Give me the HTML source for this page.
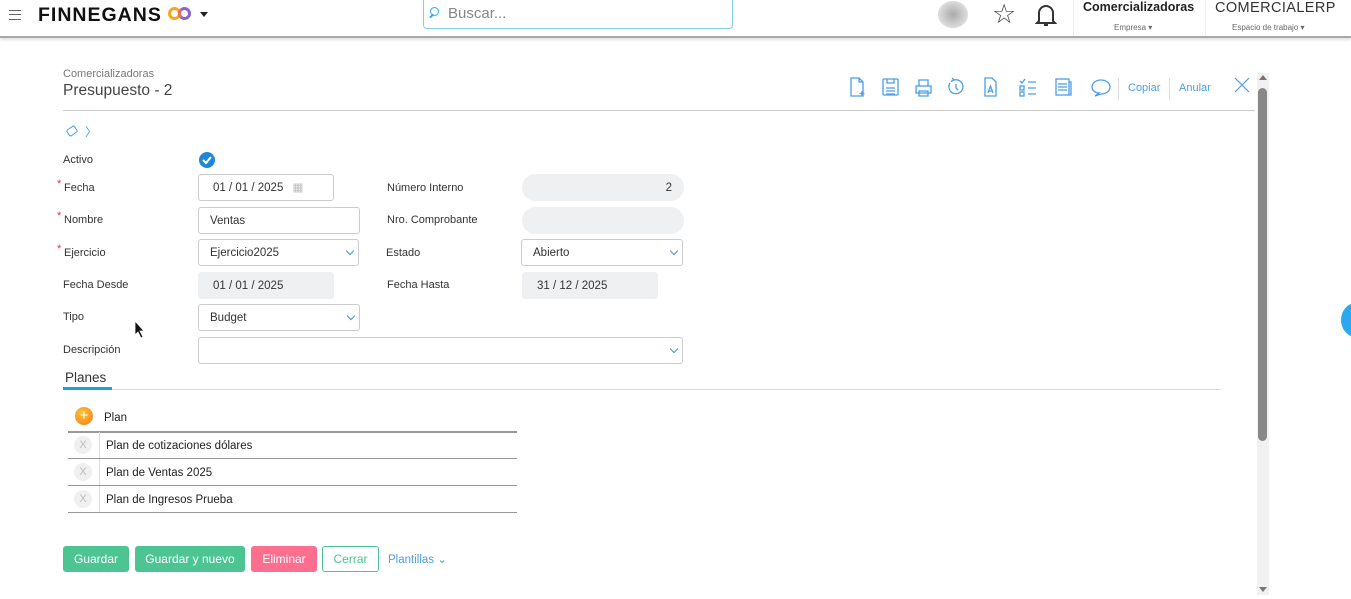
<!DOCTYPE html>
<html><head><meta charset="utf-8"><style>
*{box-sizing:border-box;margin:0;padding:0}
body{width:1351px;height:599px;overflow:hidden;background:#fff;font-family:"Liberation Sans",sans-serif;position:relative;color:#333}
.a{position:absolute}
.hdr{left:0;top:0;width:1351px;height:38px;background:#fff;border-bottom:2px solid #a8a8ad;box-shadow:0 2px 3px rgba(0,0,0,.12)}
.lbl{font-size:11px;color:#333}
.req:before{content:"*";color:#e33;position:absolute;left:-7px;top:-4px;font-size:11px}
.inp{border:1px solid #ccc;border-radius:3px;height:27px;font-size:11.5px;color:#333;padding:0 11px;line-height:27px;background:#fff}
.dis{background:#eff0f2;border-color:#eff0f2}
.chev{position:absolute;right:5px;top:8px;width:6px;height:6px;border-right:1px solid #4a90d9;border-bottom:1px solid #4a90d9;transform:rotate(45deg)}
.row{left:68px;width:449px;height:27px;border-bottom:1.5px solid #999;font-size:11.5px;color:#222}
.x{position:absolute;left:6px;top:4px;width:18px;height:18px;border-radius:50%;background:#f0f0f0;color:#bbb;font-size:11px;text-align:center;line-height:18px}
.btn{top:546px;height:26px;border-radius:3px;font-size:12px;color:#fff;text-align:center;line-height:26px}
</style></head><body>
<div class="a hdr"></div>
<div class="a" style="left:9px;top:10px;width:12px;height:10px;border-top:1.5px solid #666;border-bottom:1.5px solid #666"><div style="margin-top:3px;border-top:1.5px solid #666"></div></div>
<div class="a" style="left:38px;top:4px;font-size:19.5px;font-weight:bold;color:#111;letter-spacing:1px">FINNEGANS</div>
<div class="a" style="left:168px;top:7px;width:13px;height:13px;border:3px solid #f6a623;border-radius:50%"></div>
<div class="a" style="left:178px;top:7px;width:13px;height:13px;border:3px solid #8a63d2;border-radius:50%;border-left-color:#e86a5a"></div>
<div class="a" style="left:200px;top:12px;border-left:4px solid transparent;border-right:4px solid transparent;border-top:5px solid #222"></div>
<div class="a" style="left:423px;top:0;width:310px;height:29px;border:1px solid #7fd0ea;border-top:none;border-radius:0 0 4px 4px"></div>
<div class="a" style="left:430px;top:7px;width:9px;height:9px;border:1.5px solid #2bb0e0;border-radius:50%"></div>
<div class="a" style="left:429px;top:15px;width:5px;height:1.5px;background:#2bb0e0;transform:rotate(-45deg)"></div>
<div class="a" style="left:448px;top:5px;font-size:15px;color:#888">Buscar...</div>
<div class="a" style="left:938px;top:1px;width:30px;height:27px;border-radius:45%;background:radial-gradient(#aaa,#ddd 70%,transparent 72%)"></div>
<div class="a" style="left:992px;top:0;font-size:27px;color:#444;line-height:28px">☆</div>
<svg class="a" style="left:1035px;top:3px" width="22" height="24" viewBox="0 0 22 24"><path d="M4 18V10a7 7 0 0 1 14 0v8l2 2H2z" fill="none" stroke="#333" stroke-width="2"/><path d="M9 22h4" stroke="#333" stroke-width="2"/></svg>
<div class="a" style="left:1073px;top:0;width:1px;height:36px;background:#eee"></div>
<div class="a" style="left:1205px;top:0;width:1px;height:36px;background:#eee"></div>
<div class="a" style="left:1083px;top:0;font-size:12.5px;font-weight:bold;color:#222">Comercializadoras</div>
<div class="a" style="left:1114px;top:23px;font-size:8px;color:#666">Empresa ▾</div>
<div class="a" style="left:1215px;top:0;font-size:14.5px;color:#333;letter-spacing:.4px">COMERCIALERP</div>
<div class="a" style="left:1232px;top:23px;font-size:8px;color:#666">Espacio de trabajo ▾</div>

<div class="a" style="left:63px;top:68px;font-size:11px;color:#777">Comercializadoras</div>
<div class="a" style="left:63px;top:82px;font-size:15.5px;color:#444">Presupuesto - 2</div>
<div class="a" style="left:63px;top:110px;width:1192px;height:1px;background:#ccc"></div>
<div class="a" style="left:67px;top:127px;width:10px;height:8px;border:1.3px solid #4aa3e8;border-radius:2px;transform:rotate(-35deg)"></div>
<div class="a" style="left:85px;top:123px;font-size:12px;color:#4aa3e8">〉</div>

<svg class="a" style="left:849px;top:77px" width="380" height="20" viewBox="0 0 380 20" fill="none" stroke="#4a9fe8" stroke-width="1.3">
<path d="M2 1h8l4 4v14H2z M10 1v4h4"/><path d="M13 14v5M10.5 16.5h5"/>
<rect x="34" y="2" width="15" height="16" rx="1"/><path d="M37 11h9M37 14h9M37 17h9M38 2v4h7V2"/>
<rect x="67" y="9" width="15" height="7"/><path d="M70 9V3h9v6M70 14h9v5h-9z"/>
<path d="M101 6a7 7 0 1 0 4-3"/><path d="M103 1l2 2-3 1.5M107 7v4l2 2"/>
<path d="M136 1h7l4 4v14h-11z"/><path d="M139 16l2.5-7 2.5 7M140 14h3"/>
<path d="M171 4l2 2 3-4M179 5h8M179 11h8M179 17h8"/><rect x="171" y="9" width="4" height="4"/><rect x="171" y="15" width="4" height="4"/>
<rect x="207" y="2" width="13" height="16"/><path d="M220 5h2v13h-2M209 7h9M209 10h9M209 13h9"/>
<path d="M250 16c-3 0-7-2-7-6s4-7 9-7 9 3 9 7-4 7-9 7l-6 2z"/>
</svg>
<div class="a" style="left:1118px;top:78px;width:1px;height:22px;background:#ddd"></div>
<div class="a" style="left:1169px;top:78px;width:1px;height:22px;background:#ddd"></div>
<div class="a" style="left:1128px;top:82px;font-size:11px;color:#4a9fe8">Copiar</div>
<div class="a" style="left:1179px;top:82px;font-size:11px;color:#4a9fe8">Anular</div>
<svg class="a" style="left:1234px;top:77px" width="16" height="16"><path d="M1 1l14 14M15 1L1 15" stroke="#4a9fe8" stroke-width="1.2"/></svg>
<div class="a" style="left:1257px;top:73px;width:12px;height:522px;background:#f1f1f1"></div>
<div class="a" style="left:1259px;top:75px;border-left:4px solid transparent;border-right:4px solid transparent;border-bottom:5px solid #777"></div>
<div class="a" style="left:1259px;top:587px;border-left:4px solid transparent;border-right:4px solid transparent;border-top:5px solid #777"></div>
<div class="a" style="left:1258px;top:88px;width:9px;height:353px;background:#888;border-radius:5px"></div>
<div class="a" style="left:1341px;top:303px;width:30px;height:34px;border-radius:50%;background:#2aa8f0"></div>

<div class="a lbl" style="left:63px;top:154px">Activo</div>
<div class="a" style="left:199px;top:152px;width:16px;height:16px;border-radius:50%;background:#1e88d8"></div>
<svg class="a" style="left:199px;top:152px" width="16" height="16"><path d="M4 8l3 3 5-6" stroke="#fff" stroke-width="2" fill="none"/></svg>

<div class="a lbl req" style="left:64px;top:182px">Fecha</div>
<div class="a inp" style="left:198px;top:174px;width:136px;padding-left:14px">01 / 01 / 2025 <span style="color:#bbb;margin-left:6px">▦</span></div>
<div class="a lbl req" style="left:64px;top:214px">Nombre</div>
<div class="a inp" style="left:198px;top:207px;width:162px">Ventas</div>
<div class="a lbl req" style="left:64px;top:247px">Ejercicio</div>
<div class="a inp" style="left:198px;top:239px;width:161px">Ejercicio2025<span class="chev"></span></div>
<div class="a lbl" style="left:63px;top:279px">Fecha Desde</div>
<div class="a inp dis" style="left:198px;top:272px;width:136px;padding-left:14px">01 / 01 / 2025</div>
<div class="a lbl" style="left:63px;top:311px">Tipo</div>
<div class="a inp" style="left:198px;top:304px;width:162px">Budget<span class="chev"></span></div>
<div class="a lbl" style="left:63px;top:344px">Descripción</div>
<div class="a inp" style="left:198px;top:337px;width:485px"><span class="chev"></span></div>

<div class="a lbl" style="left:387px;top:182px">Número Interno</div>
<div class="a inp dis" style="left:522px;top:174px;width:162px;border-radius:14px;text-align:right">2</div>
<div class="a lbl" style="left:387px;top:214px">Nro. Comprobante</div>
<div class="a inp dis" style="left:522px;top:207px;width:162px;border-radius:14px"></div>
<div class="a lbl" style="left:386px;top:247px">Estado</div>
<div class="a inp" style="left:521px;top:239px;width:162px">Abierto<span class="chev"></span></div>
<div class="a lbl" style="left:387px;top:279px">Fecha Hasta</div>
<div class="a inp dis" style="left:522px;top:272px;width:136px;padding-left:14px">31 / 12 / 2025</div>

<svg class="a" style="left:134px;top:320px" width="12" height="20"><path d="M1 1v14l3-3 3 6 2-1-3-6h4z" fill="#111" stroke="#fff" stroke-width=".8"/></svg>

<div class="a" style="left:65px;top:370px;font-size:13.5px;color:#333">Planes</div>
<div class="a" style="left:63px;top:389px;width:1158px;height:1px;background:#ddd"></div>
<div class="a" style="left:63px;top:387px;width:49px;height:3px;background:#1aa3c9"></div>

<div class="a" style="left:75px;top:407px;width:18px;height:18px;border-radius:50%;background:radial-gradient(circle at 40% 35%,#ffc233,#f57a1c);color:#fff;text-align:center;line-height:17px;font-size:15px">+</div>
<div class="a" style="left:104px;top:412px;font-size:11.5px;color:#222">Plan</div>
<div class="a" style="left:68px;top:431px;width:449px;height:1.5px;background:#999"></div>
<div class="a row" style="top:432px"><div class="x">X</div><div class="a" style="left:31px;top:0;width:1px;height:26px;background:#ddd"></div><div class="a" style="left:38px;top:8px">Plan de cotizaciones dólares</div></div>
<div class="a row" style="top:459px"><div class="x">X</div><div class="a" style="left:31px;top:0;width:1px;height:26px;background:#ddd"></div><div class="a" style="left:38px;top:8px">Plan de Ventas 2025</div></div>
<div class="a row" style="top:486px"><div class="x">X</div><div class="a" style="left:31px;top:0;width:1px;height:26px;background:#ddd"></div><div class="a" style="left:38px;top:8px">Plan de Ingresos Prueba</div></div>

<div class="a btn" style="left:63px;width:66px;background:#4cc593">Guardar</div>
<div class="a btn" style="left:135px;width:110px;background:#4cc593">Guardar y nuevo</div>
<div class="a btn" style="left:251px;width:66px;background:#fe6f8f">Eliminar</div>
<div class="a btn" style="left:322px;width:57px;border:1px solid #4cc593;color:#4cc593;line-height:24px">Cerrar</div>
<div class="a" style="left:388px;top:552px;font-size:11.5px;color:#4a9fe8">Plantillas ⌄</div>
</body></html>
